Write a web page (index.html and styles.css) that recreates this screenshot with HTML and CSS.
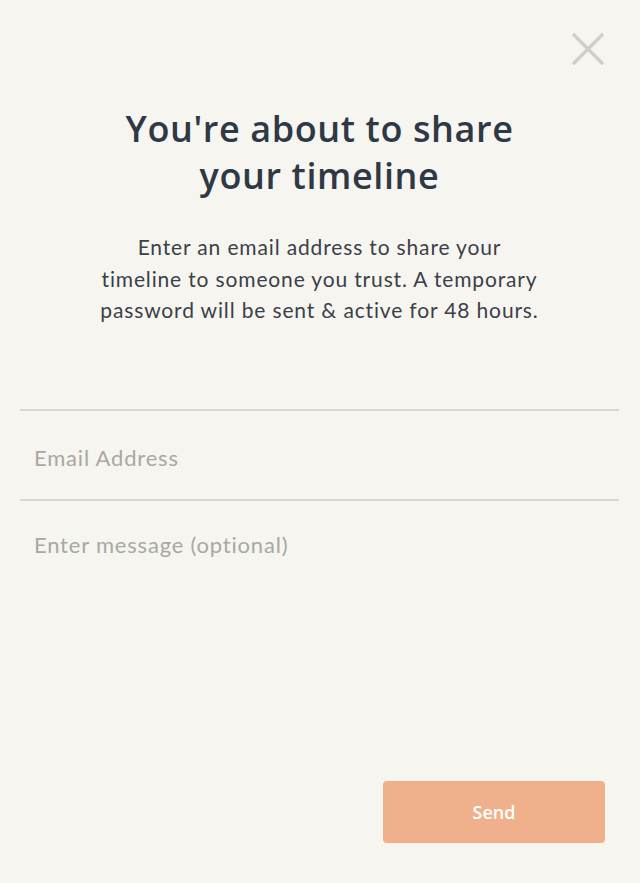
FILE: index.html
```html
<!DOCTYPE html>
<html>
<head>
<meta charset="utf-8">
<link rel="stylesheet" href="styles.css">
</head>
<body>
<div class="modal">
  <div class="top">
    <button class="close" aria-label="Close">
      <svg width="34" height="34" viewBox="0 0 34 34"><path d="M2 2 L32 32 M32 2 L2 32" stroke="#cfcecb" stroke-width="3.2" fill="none"/></svg>
    </button>
  </div>
  <h1 class="title">You're about to share<br>your timeline</h1>
  <p class="intro">Enter an email address to share your<br>timeline to someone you trust. A temporary<br>password will be sent &amp; active for 48 hours.</p>
  <div class="form">
    <div class="field"><span class="placeholder">Email Address</span></div>
    <div class="field msg"><span class="placeholder">Enter message (optional)</span></div>
  </div>
  <div class="actions">
    <button class="send">Send</button>
  </div>
</div>
</body>
</html>
```
FILE: styles.css
```css
html, body { margin: 0; padding: 0; }
body {
  background: #f6f5f0;
  width: 640px;
  height: 883px;
  overflow: hidden;
}
.modal {
  height: 883px;
  display: flex;
  flex-direction: column;
  box-sizing: border-box;
  padding: 0 21px 40px 20px;
}
.top {
  display: flex;
  justify-content: flex-end;
  padding-top: 32px;
  padding-right: 14px;
}
.close {
  background: none;
  border: 0;
  padding: 0;
  width: 34px;
  height: 34px;
  cursor: pointer;
}
.close svg { display: block; }
.title {
  margin: 39px 0 0;
  text-align: center;
  font-family: "Open Sans", "Noto Sans", sans-serif;
  font-weight: 600;
  font-size: 36px;
  line-height: 47px;
  color: #2f3945;
  letter-spacing: 0.6px;
}
.intro {
  margin: 32px 0 0;
  text-align: center;
  font-family: "Lato", "Open Sans", sans-serif;
  font-size: 21px;
  line-height: 31.5px;
  color: #3b4049;
  letter-spacing: 0.85px;
}
.form {
  margin-top: 83px;
}
.field {
  border-top: 2px solid #d8d7d2;
  padding: 35px 14px 0;
  height: 53px;
}
.field.msg { height: 80px; padding-top: 32px; }
.placeholder {
  font-family: "Lato", "Open Sans", sans-serif;
  font-size: 22px;
  color: #a9a8a3;
  line-height: 24px;
  letter-spacing: 0.8px;
  display: block;
}
.actions {
  margin-top: auto;
  display: flex;
  justify-content: flex-end;
  padding-right: 14px;
}
.send {
  width: 222px;
  height: 62px;
  background: #f0b08b;
  border: 0;
  border-radius: 4px;
  color: #ffffff;
  font-family: "Open Sans", "Noto Sans", sans-serif;
  font-size: 18px;
  font-weight: 600;
  cursor: pointer;
}
```
